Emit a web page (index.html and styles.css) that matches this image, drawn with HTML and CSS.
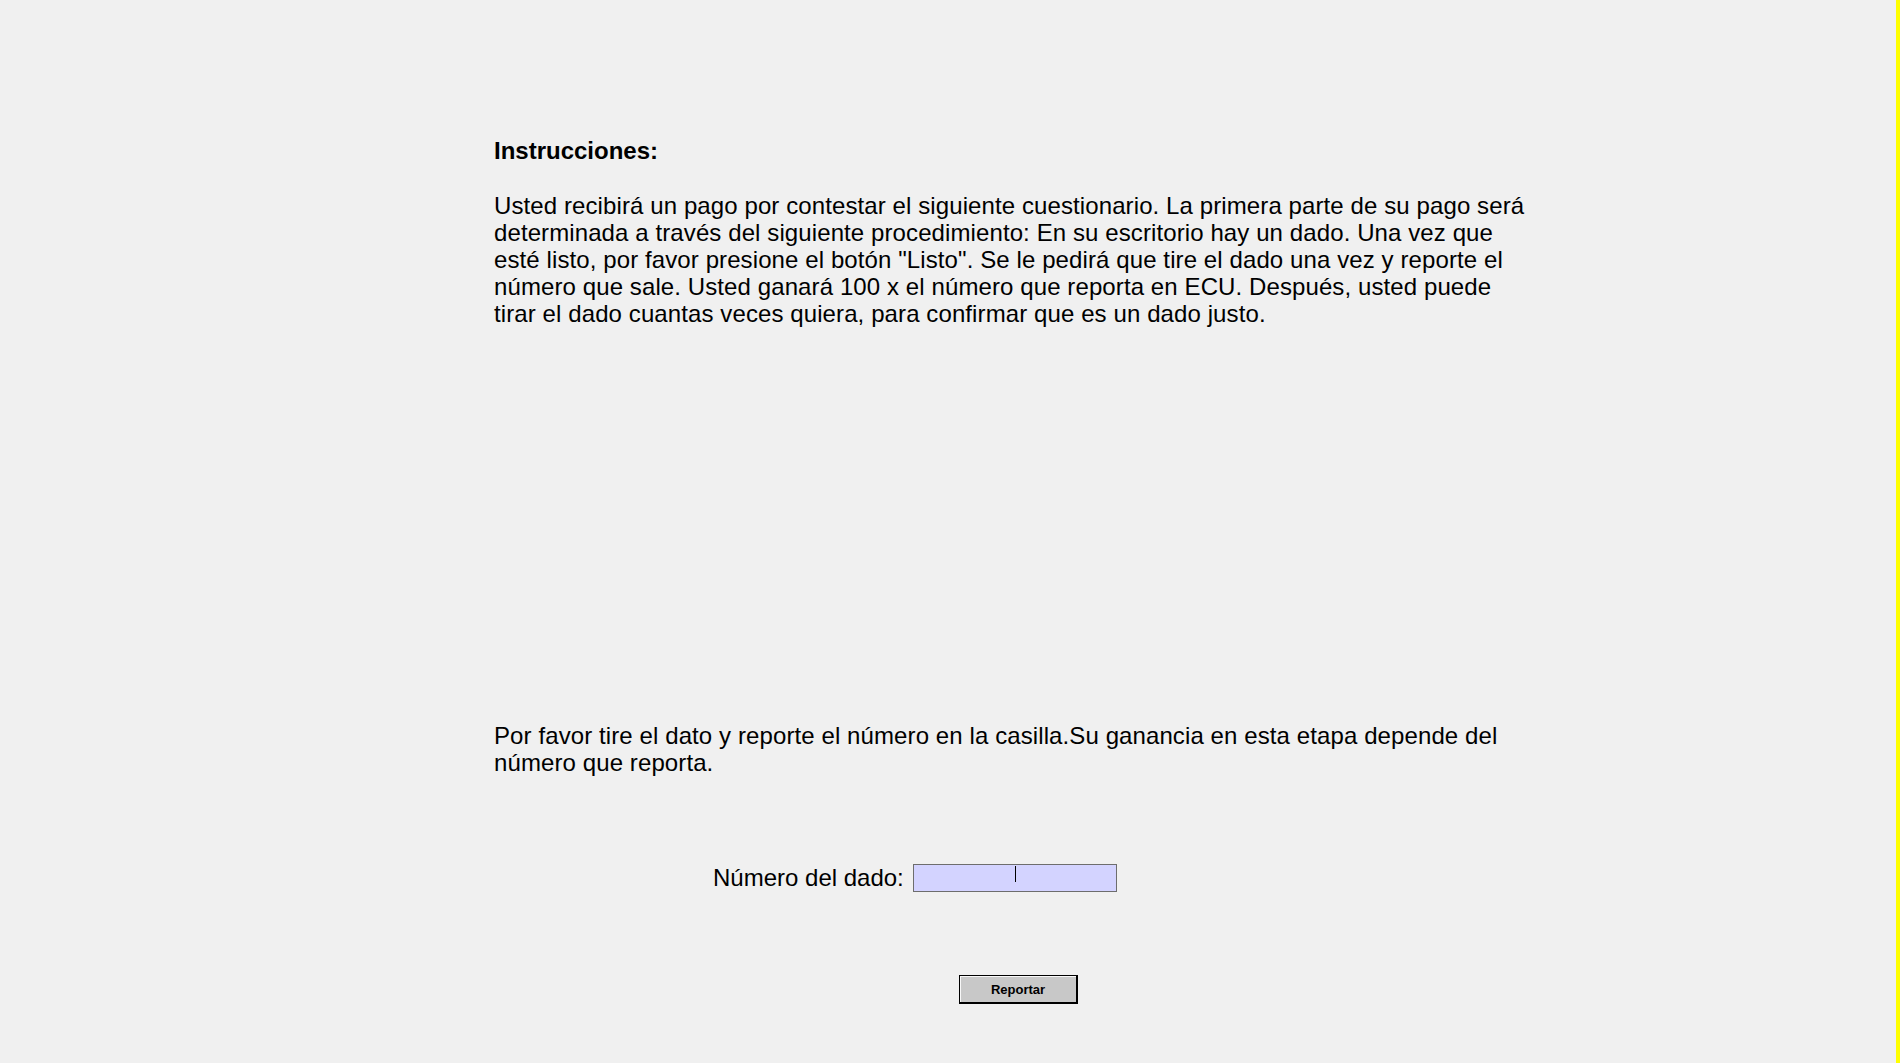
FILE: index.html
```html
<!DOCTYPE html>
<html lang="es">
<head>
<meta charset="utf-8">
<title>Instrucciones</title>
<link rel="stylesheet" href="styles.css">
</head>
<body>
<div class="page">
  <main class="content">
    <section class="instructions">
      <h1 class="title">Instrucciones:</h1>
      <p class="text">Usted recibirá un pago por contestar el siguiente cuestionario. La primera parte de su pago será determinada a través del siguiente procedimiento: En su escritorio hay un dado. Una vez que esté listo, por favor presione el botón "Listo". Se le pedirá que tire el dado una vez y reporte el número que sale. Usted ganará 100 x el número que reporta en ECU. Después, usted puede tirar el dado cuantas veces quiera, para confirmar que es un dado justo.</p>
      <p class="text prompt">Por favor tire el dato y reporte el número en la casilla.Su ganancia en esta etapa depende del número que reporta.</p>
    </section>
    <div class="field-row">
      <label class="label" for="dado">Número del dado:</label>
      <div class="input"><span class="caret"></span></div>
    </div>
    <div class="button-row">
      <button class="btn" type="button">Reportar</button>
    </div>
  </main>
  <div class="bar"></div>
</div>
</body>
</html>
```
FILE: styles.css
```css
html, body {
  margin: 0;
  padding: 0;
  height: 100%;
}
body {
  background: #f0f0f0;
  font-family: "Liberation Sans", Arial, sans-serif;
  color: #000;
  overflow: hidden;
}
.page {
  display: flex;
  height: 100vh;
}
.content {
  flex: 1;
  display: flex;
  flex-direction: column;
}
.bar {
  width: 4px;
  background: #ffff00;
}
.instructions {
  margin-left: 494px;
  width: 1038px;
  padding-top: 137px;
}
.title {
  margin: 0;
  font-size: 24px;
  font-weight: bold;
  line-height: 27px;
}
.text {
  margin: 28px 0 0;
  font-size: 24px;
  line-height: 27px;
  letter-spacing: 0.1px;
}
.prompt {
  margin-top: 395px;
}
.field-row {
  display: flex;
  align-items: center;
  margin-left: 713px;
  margin-top: 88px;
  gap: 9px;
}
.label {
  font-size: 24px;
  line-height: 28px;
}
.input {
  width: 202px;
  height: 26px;
  border: 1px solid #6d6d6d;
  background: #d3d3ff;
  position: relative;
}
.caret {
  position: absolute;
  left: 101px;
  top: 1px;
  width: 1px;
  height: 16px;
  background: #000;
}
.button-row {
  margin-left: 959px;
  margin-top: 83px;
}
.btn {
  width: 119px;
  height: 29px;
  padding: 0;
  font-family: "Liberation Sans", Arial, sans-serif;
  font-size: 13px;
  font-weight: bold;
  color: #000;
  background: #c8c8c8;
  border: 1px solid #000;
  border-right-width: 2px;
  border-bottom-width: 2px;
  box-shadow: inset 1px 1px 0 #f8f8f8;
}
```
